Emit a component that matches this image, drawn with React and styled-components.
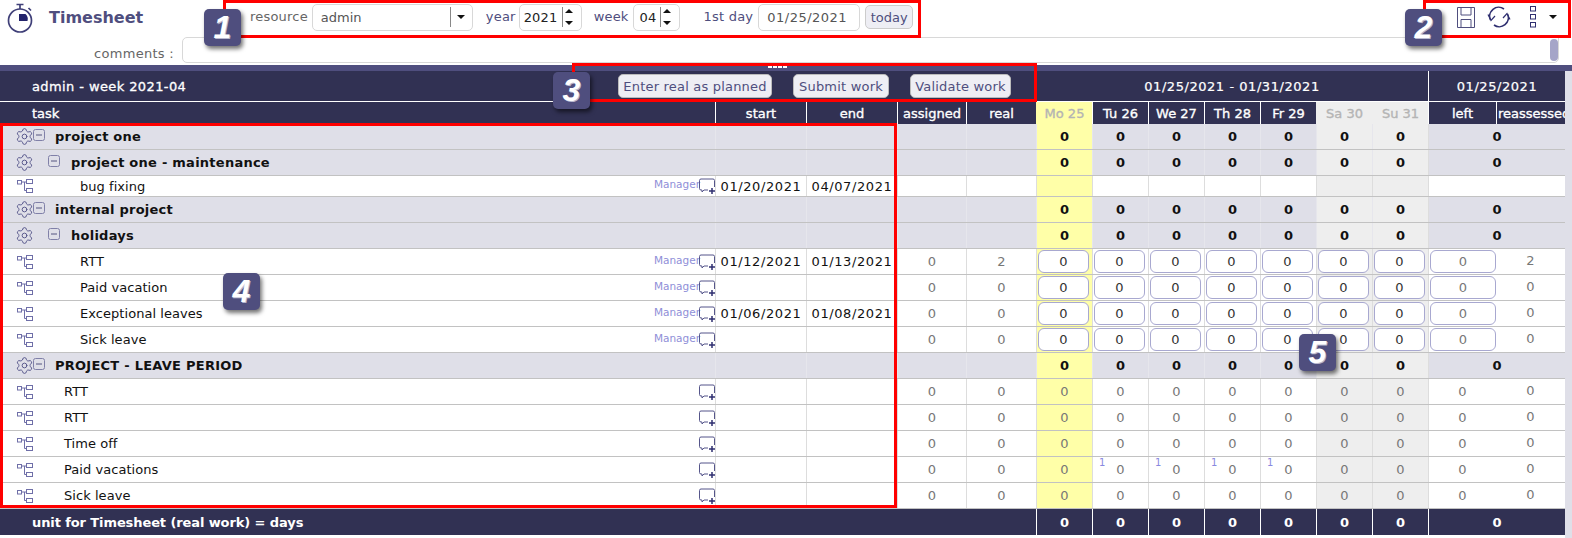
import React from "react";
import styled, { createGlobalStyle } from "styled-components";
import { Settings } from "lucide-react";

const DARK = "#313153";
const ACCENT = "#4f4e7e";
const LAV = "#dfdfe8";
const COLS = "715px 91px 91px 69px 70px repeat(7, 56px) 68px 69px";

const Global = createGlobalStyle`
  html, body { margin: 0; padding: 0; background: #fff; }
  body { font-family: "DejaVu Sans", Verdana, sans-serif; font-size: 13px; overflow: hidden; }
  * { box-sizing: border-box; }
`;

const Page = styled.div`
  position: relative;
  width: 1572px;
  height: 538px;
  overflow: hidden;
`;
const Toolbar = styled.header`
  height: 65px;
  display: flex;
  flex-direction: column;
`;
const TopRow = styled.div`
  height: 37px;
  display: flex;
  align-items: center;
  padding: 0 0 3px 7px;
`;
const Title = styled.h1`
  margin: 0 0 0 16px;
  width: 201px;
  font-size: 16px;
  font-weight: bold;
  color: ${ACCENT};
`;
const Label = styled.label`
  color: ${(p) => p.$color || "#666"};
  font-size: 13px;
  letter-spacing: 0.2px;
  margin-left: ${(p) => p.$ml || 0}px;
  margin-right: ${(p) => p.$mr || 5}px;
  padding-bottom: 2px;
`;
const Field = styled.div`
  height: 27px;
  width: ${(p) => p.$w}px;
  border: 1px solid #d8d8d8;
  border-radius: 5px;
  display: flex;
  align-items: center;
  background: #fff;
  color: ${(p) => p.$color || "#555"};
  padding-left: ${(p) => p.$pl || 8}px;
  letter-spacing: ${(p) => p.$ls || 0}px;
`;
const FieldText = styled.span`
  flex: 1;
`;
const SelectArrow = styled.span`
  width: 22px;
  height: 20px;
  border-left: 1px solid #888;
  display: flex;
  align-items: center;
  justify-content: center;
  &::after {
    content: "";
    border: 4px solid transparent;
    border-top: 4px solid #111;
    border-bottom: 0;
  }
`;
const Spin = styled.span`
  width: 14px;
  height: 20px;
  border-left: 1px solid #888;
  margin-right: 5px;
  display: flex;
  flex-direction: column;
  align-items: center;
  justify-content: space-between;
  padding: 2px 0;
`;
const SpinArrow = styled.i`
  border-left: 4px solid transparent;
  border-right: 4px solid transparent;
  border-bottom: ${(p) => (p.$up ? "4px solid #111" : "0")};
  border-top: ${(p) => (p.$up ? "0" : "4px solid #111")};
`;
const TodayButton = styled.button`
  width: 48px;
  height: 24px;
  margin-left: 5px;
  padding: 0;
  font: 13px "DejaVu Sans", sans-serif;
  color: ${ACCENT};
  background: #eeeef4;
  border: 1px solid #ccc;
  border-radius: 5px;
`;
const RightTools = styled.div`
  margin-left: auto;
  width: 116px;
  display: flex;
  align-items: center;
  color: ${ACCENT};
`;
const ToolSlot = styled.span`
  display: flex;
  margin-left: ${(p) => p.$ml || 0}px;
`;
const Caret = styled.span`
  border: 4px solid transparent;
  border-top: 4px solid #111;
  border-bottom: 0;
  margin-left: 13px;
`;
const CommentRow = styled.div`
  height: 28px;
  display: flex;
  align-items: flex-start;
  padding-left: 94px;
`;
const CommentLabel = styled.label`
  width: 88px;
  color: #666;
  padding-top: 9px;
  letter-spacing: 0.3px;
`;
const CommentBox = styled.div`
  width: 1377px;
  height: 26px;
  border: 1px solid #d8d8d8;
  border-radius: 5px 0 5px 5px;
  display: flex;
  justify-content: flex-end;
`;
const ScrollThumb = styled.span`
  width: 8px;
  height: 22px;
  margin-top: 1px;
  border-radius: 4px;
  background: #a5a5c8;
`;
const Strip = styled.div`
  height: 6px;
  background: ${ACCENT};
  display: flex;
  justify-content: center;
  padding: 1px 16px 0 0;
`;
const Grip = styled.span`
  width: 20px;
  height: 2px;
  background: repeating-linear-gradient(90deg, #fff 0 4px, transparent 4px 5px);
`;
const Body = styled.div`
  display: flex;
  height: 467px;
`;
const TableWrap = styled.div`
  width: 1565px;
`;
const Gutter = styled.div`
  flex: 1;
  background: ${LAV};
`;
const HeadTop = styled.div`
  height: 31px;
  background: ${DARK};
  border-bottom: 1px solid #fff;
  display: grid;
  grid-template-columns: 1036px 392px 137px;
  color: #fff;
`;
const HeadMain = styled.div`
  display: flex;
  align-items: center;
  padding-left: 32px;
`;
const HeadName = styled.span`
  width: 586px;
  -webkit-text-stroke: 0.3px #fff;
  font-size: 13px;
  letter-spacing: 0.4px;
`;
const ActionButton = styled.button`
  height: 24px;
  width: ${(p) => p.$w}px;
  margin-right: ${(p) => p.$mr || 0}px;
  padding: 0;
  font: 13px "DejaVu Sans", sans-serif;
  letter-spacing: 0.2px;
  color: ${ACCENT};
  background: #eeeef4;
  border: 1px solid #bbb;
  border-radius: 5px;
`;
const HeadSpan = styled.div`
  display: flex;
  align-items: center;
  justify-content: center;
  font-size: 13px;
  letter-spacing: 0.55px;
  -webkit-text-stroke: 0.2px #fff;
  border-left: ${(p) => (p.$line ? "1px solid #fff" : "0")};
`;
const HeadCols = styled.div`
  height: 22px;
  display: grid;
  grid-template-columns: ${COLS};
  background: ${DARK};
  color: #fff;
  font-size: 13px;
  -webkit-text-stroke: 0.35px currentColor;
`;
const HeadCell = styled.div`
  display: flex;
  align-items: center;
  justify-content: ${(p) => (p.$left || p.$clip ? "flex-start" : "center")};
  padding-left: ${(p) => (p.$left ? "32px" : p.$clip ? "1px" : 0)};
  overflow: hidden;
  white-space: nowrap;
  border-left: ${(p) => (p.$left ? 0 : "1px solid #fff")};
  ${(p) => p.$soft && `background: ${p.$soft}; color: #b4b4b4; border-left-color: ${p.$soft};`}
`;
const Row = styled.div`
  height: ${(p) => p.$h}px;
  display: grid;
  grid-template-columns: ${COLS};
  background: ${(p) => (p.$group ? LAV : "#fff")};
  border-bottom: 1px solid #c2c2c2;
`;
const TaskCell = styled.div`
  display: flex;
  align-items: center;
  min-width: 0;
  padding-left: ${(p) => (p.$group ? 15 : 17)}px;
  font-weight: ${(p) => (p.$group ? "bold" : "normal")};
  letter-spacing: ${(p) => (p.$group ? 0.25 : 0.05)}px;
  color: #111;
`;
const TaskName = styled.span`
  margin-left: ${(p) => p.$ml}px;
  white-space: nowrap;
`;
const Manager = styled.span`
  margin-left: auto;
  margin-right: -1px;
  font-size: 10.5px;
  letter-spacing: 0;
  color: #8f8fd8;
  padding-bottom: 4px;
`;
const CommentIcon = styled.span`
  margin-left: ${(p) => (p.$auto ? "auto" : "0")};
  margin-right: -1px;
  display: flex;
`;
const Cell = styled.div`
  position: relative;
  display: flex;
  align-items: center;
  justify-content: center;
  padding-bottom: ${(p) => p.$pb || 0}px;
  border-left: 1px solid ${(p) => p.$line || "#ddd"};
  background: ${(p) => p.$bg || "transparent"};
  color: ${(p) => p.$color || "#777"};
  font-weight: ${(p) => (p.$bold ? "bold" : "normal")};
  grid-column: ${(p) => (p.$span ? `span ${p.$span}` : "auto")};
`;
const DateText = styled.span`
  color: #111;
  letter-spacing: 0.6px;
`;
const NoLine = styled(Cell)`
  border-left: 0;
`;
const WorkInput = styled.div`
  width: ${(p) => p.$w || 51}px;
  height: 23px;
  margin-left: ${(p) => p.$ml || 0}px;
  margin-right: ${(p) => p.$mr || 0}px;
  border: 1px solid #a8a8d0;
  border-radius: 6px;
  background: #fff;
  color: ${(p) => p.$color || "#333"};
  display: flex;
  align-items: center;
  justify-content: center;
`;
const Planned = styled.sup`
  position: absolute;
  left: 6px;
  top: 0;
  margin: 0;
  font-size: 10px;
  line-height: 12px;
  color: #8888e0;
`;
const Footer = styled.div`
  height: 26px;
  display: grid;
  grid-template-columns: 1036px repeat(7, 56px) 137px;
  background: ${DARK};
  color: #fff;
  font-weight: bold;
`;
const FooterLabel = styled.div`
  display: flex;
  align-items: center;
  padding-left: 32px;
  letter-spacing: -0.1px;
`;
const FooterCell = styled.div`
  display: flex;
  align-items: center;
  justify-content: center;
  border-left: 1px solid #fff;
`;
const RedBox = styled.div`
  position: absolute;
  left: ${(p) => p.$x}px;
  top: ${(p) => p.$y}px;
  width: ${(p) => p.$w}px;
  height: ${(p) => p.$h}px;
  border: 3px solid #f00;
  pointer-events: none;
`;
const Badge = styled.div`
  position: absolute;
  left: ${(p) => p.$x}px;
  top: ${(p) => p.$y}px;
  width: 37px;
  height: 37px;
  border-radius: 5px;
  background: ${ACCENT};
  box-shadow: 2px 3px 4px rgba(0, 0, 0, 0.55);
  color: #fff;
  font: italic bold 32px "Liberation Sans", sans-serif;
  text-shadow: 1px 1px 0 #b9b9cf;
  display: flex;
  align-items: center;
  justify-content: center;
`;

const TimerIcon = () => (
  <svg width="26" height="33" viewBox="0 0 26 33" fill="none" stroke="#3f3f78" strokeWidth="1.700">
    <circle cx="13" cy="19.500" r="11.500" />
    <path d="M9.500 3.500h7M13 3.500v4.500M21.500 7l2.500 2.500" />
    <path d="M12 13h6.500a7 7 0 0 1 2 7H12z" fill="#23236b" stroke="none" />
  </svg>
);
const SaveIcon = () => (
  <svg width="20" height="23" viewBox="0 0 20 23" fill="none" stroke={ACCENT} strokeWidth="1">
    <path d="M1.500 1.500h17v20h-17z" />
    <path d="M5 1.500v7.500h10V1.500M5 21.500v-8h10v8" />
  </svg>
);
const SyncIcon = () => (
  <svg width="24" height="22" viewBox="0 0 24 22" fill="none" stroke="#2f2f70" strokeWidth="1.600">
    <path d="M3.500 14A9 9 0 0 1 17 3" />
    <path d="M20.500 8A9 9 0 0 1 7 19" />
    <path d="M1 8.500l3 6 4-4.500M23 13.500l-3-6-4 4.500" strokeWidth="1.200" />
  </svg>
);
const DotsIcon = () => (
  <svg width="6" height="22" viewBox="0 0 6 22" fill="none" stroke="#2f2f70" strokeWidth="1">
    <rect x="0.500" y="0.500" width="5" height="4.500" />
    <rect x="0.500" y="8.500" width="5" height="4.500" />
    <rect x="0.500" y="16.500" width="5" height="4.500" />
  </svg>
);
const TreeIcon = () => (
  <svg width="16" height="14" viewBox="0 0 16 14" fill="none" stroke="#6f6fa8" strokeWidth="1">
    <rect x="0.500" y="1.500" width="4" height="3.500" />
    <rect x="9.500" y="0.500" width="6" height="4" />
    <rect x="9.500" y="9.500" width="6" height="4" />
    <path d="M4.500 3h5M7.500 3v8.500h2" />
  </svg>
);
const MinusIcon = ({ ml }) => (
  <svg width="12" height="12" viewBox="0 0 12 12" fill="none" stroke="#8080a8" style={{ marginLeft: ml, marginBottom: 3 }}>
    <rect x="0.500" y="0.500" width="11" height="11" rx="2" />
    <path d="M3 6h6" stroke="#555580" />
  </svg>
);
const BubbleIcon = () => (
  <svg width="17" height="16" viewBox="0 0 17 16" fill="none" stroke="#55558a" strokeWidth="1">
    <path d="M9 12H5l-2 2v-2H2a1.500 1.500 0 0 1-1.500-1.500v-8A1.500 1.500 0 0 1 2 1h12a1.500 1.500 0 0 1 1.500 1.500V9" />
    <path d="M10 13h6M13 10v6" stroke="#2f2f70" strokeWidth="1.500" />
  </svg>
);

const dayHeads = ["Mo 25", "Tu 26", "We 27", "Th 28", "Fr 29", "Sa 30", "Su 31"];
const dayBg = (i) => (i === 0 ? "#ffffa8" : i > 4 ? "#eeeeee" : undefined);

const rows = [
  { group: 1, name: "project one", icon: 1 },
  { group: 1, name: "project one - maintenance", icon: 2 },
  { name: "bug fixing", ml: 47, manager: 1, start: "01/20/2021", end: "04/07/2021", h: 21, mode: "empty" },
  { group: 1, name: "internal project", icon: 1 },
  { group: 1, name: "holidays", icon: 2 },
  { name: "RTT", ml: 47, manager: 1, start: "01/12/2021", end: "01/13/2021", real: "2", reass: "2", mode: "input" },
  { name: "Paid vacation", ml: 47, manager: 1, mode: "input" },
  { name: "Exceptional leaves", ml: 47, manager: 1, start: "01/06/2021", end: "01/08/2021", mode: "input" },
  { name: "Sick leave", ml: 47, manager: 1, mode: "input" },
  { group: 1, name: "PROJECT - LEAVE PERIOD", icon: 1 },
  { name: "RTT", ml: 31, mode: "plain" },
  { name: "RTT", ml: 31, mode: "plain" },
  { name: "Time off", ml: 31, mode: "plain" },
  { name: "Paid vacations", ml: 31, mode: "plain", planned: 1 },
  { name: "Sick leave", ml: 31, mode: "plain" },
];

function TaskLabel({ r }) {
  if (r.group) {
    return (
      <TaskCell $group>
        <Settings size={19} strokeWidth={1.2} color="#55558a" />
        <MinusIcon ml={r.icon === 1 ? -1 : 14} />
        <TaskName $ml={r.icon === 1 ? 10 : 11}>{r.name}</TaskName>
      </TaskCell>
    );
  }
  return (
    <TaskCell>
      <TreeIcon />
      <TaskName $ml={r.ml}>{r.name}</TaskName>
      {r.manager ? <Manager>Manager</Manager> : null}
      <CommentIcon $auto={!r.manager}>
        <BubbleIcon />
      </CommentIcon>
    </TaskCell>
  );
}

function DayCells({ r }) {
  return dayHeads.map((d, i) => {
    const bg = dayBg(i);
    if (r.group) {
      return (
        <Cell key={d} $bg={bg} $bold $color="#111" $line="#e6e6ec">
          0
        </Cell>
      );
    }
    if (r.mode === "empty") return <Cell key={d} $bg={bg} />;
    if (r.mode === "input") {
      return (
        <Cell key={d} $bg={bg}>
          <WorkInput $mr={2}>0</WorkInput>
        </Cell>
      );
    }
    return (
      <Cell key={d} $bg={bg}>
        {r.planned && i > 0 && i < 5 ? <Planned>1</Planned> : null}0
      </Cell>
    );
  });
}

function TableRow({ r }) {
  const showValues = !r.group && r.mode !== "empty";
  const line = r.group ? "#e6e6ec" : "#ddd";
  return (
    <Row $h={r.h || 26} $group={r.group}>
      <TaskLabel r={r} />
      <Cell $line={line}>{r.start ? <DateText>{r.start}</DateText> : null}</Cell>
      <Cell $line={line}>{r.end ? <DateText>{r.end}</DateText> : null}</Cell>
      <Cell $line={line}>{showValues ? "0" : null}</Cell>
      <Cell $line={line}>{showValues ? r.real || "0" : null}</Cell>
      <DayCells r={r} />
      {r.group ? (
        <Cell $span={2} $bold $color="#111" $line="#ddd">
          0
        </Cell>
      ) : (
        <>
          <Cell>
            {r.mode === "input" ? (
              <WorkInput $w={66} $ml={1} $color="#777">
                0
              </WorkInput>
            ) : r.mode === "plain" ? (
              "0"
            ) : null}
          </Cell>
          <NoLine $pb={3}>{showValues ? r.reass || "0" : null}</NoLine>
        </>
      )}
    </Row>
  );
}

export default function App() {
  return (
    <Page>
      <Global />
      <Toolbar>
        <TopRow>
          <TimerIcon />
          <Title>Timesheet</Title>
          <Label $mr={4}>resource</Label>
          <Field $w={161}>
            <FieldText>admin</FieldText>
            <SelectArrow />
          </Field>
          <Label $ml={13} $mr={3} $color={ACCENT}>
            year
          </Label>
          <Field $w={63} $pl={4} $color="#222" $ls={0.2}>
            <FieldText>2021</FieldText>
            <Spin>
              <SpinArrow $up />
              <SpinArrow />
            </Spin>
          </Field>
          <Label $ml={12} $mr={4} $color={ACCENT}>
            week
          </Label>
          <Field $w={47} $pl={6} $color="#222">
            <FieldText>04</FieldText>
            <Spin>
              <SpinArrow $up />
              <SpinArrow />
            </Spin>
          </Field>
          <Label $ml={24} $color={ACCENT}>
            1st day
          </Label>
          <Field $w={102} $pl={8} $ls={0.5}>
            01/25/2021
          </Field>
          <TodayButton>today</TodayButton>
          <RightTools>
            <SaveIcon />
            <ToolSlot $ml={11}>
              <SyncIcon />
            </ToolSlot>
            <ToolSlot $ml={19}>
              <DotsIcon />
            </ToolSlot>
            <Caret />
          </RightTools>
        </TopRow>
        <CommentRow>
          <CommentLabel>comments :</CommentLabel>
          <CommentBox>
            <ScrollThumb />
          </CommentBox>
        </CommentRow>
      </Toolbar>
      <Strip>
        <Grip />
      </Strip>
      <Body>
        <TableWrap>
          <HeadTop>
            <HeadMain>
              <HeadName>admin - week 2021-04</HeadName>
              <ActionButton $w={154} $mr={21}>
                Enter real as planned
              </ActionButton>
              <ActionButton $w={96} $mr={21}>
                Submit work
              </ActionButton>
              <ActionButton $w={101}>Validate work</ActionButton>
            </HeadMain>
            <HeadSpan>01/25/2021 - 01/31/2021</HeadSpan>
            <HeadSpan $line>01/25/2021</HeadSpan>
          </HeadTop>
          <HeadCols>
            <HeadCell $left>task</HeadCell>
            <HeadCell>start</HeadCell>
            <HeadCell>end</HeadCell>
            <HeadCell>assigned</HeadCell>
            <HeadCell>real</HeadCell>
            {dayHeads.map((d, i) => (
              <HeadCell key={d} $soft={i === 0 ? "#ffffa8" : i > 4 ? "#eeeeee" : undefined}>
                {d}
              </HeadCell>
            ))}
            <HeadCell>left</HeadCell>
            <HeadCell $clip>reassessed</HeadCell>
          </HeadCols>
          {rows.map((r, i) => (
            <TableRow key={i} r={r} />
          ))}
          <Footer>
            <FooterLabel>unit for Timesheet (real work) = days</FooterLabel>
            {dayHeads.map((d) => (
              <FooterCell key={d}>0</FooterCell>
            ))}
            <FooterCell>0</FooterCell>
          </Footer>
        </TableWrap>
        <Gutter />
      </Body>
      <RedBox $x={223} $y={0} $w={698} $h={38} />
      <RedBox $x={1423} $y={0} $w={148} $h={38} />
      <RedBox $x={572} $y={63} $w={465} $h={39} />
      <RedBox $x={0} $y={123} $w={897} $h={385} />
      <Badge $x={204} $y={9}>1</Badge>
      <Badge $x={1405} $y={9}>2</Badge>
      <Badge $x={553} $y={72}>3</Badge>
      <Badge $x={223} $y={273}>4</Badge>
      <Badge $x={1299} $y={334}>5</Badge>
    </Page>
  );
}
